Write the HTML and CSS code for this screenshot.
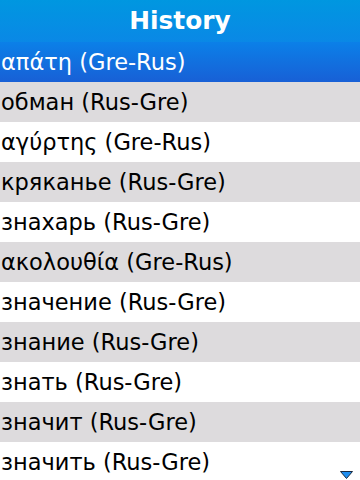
FILE: index.html
```html
<!DOCTYPE html>
<html>
<head>
<meta charset="utf-8">
<link rel="stylesheet" href="styles.css">
</head>
<body>
<div class="screen">
  <div class="header">History</div>
  <ul class="list">
    <li class="row selected">απάτη (Gre-Rus)</li>
    <li class="row alt">обман (Rus-Gre)</li>
    <li class="row">αγύρτης (Gre-Rus)</li>
    <li class="row alt">кряканье (Rus-Gre)</li>
    <li class="row">знахарь (Rus-Gre)</li>
    <li class="row alt">ακολουθία (Gre-Rus)</li>
    <li class="row">значение (Rus-Gre)</li>
    <li class="row alt">знание (Rus-Gre)</li>
    <li class="row">знать (Rus-Gre)</li>
    <li class="row alt">значит (Rus-Gre)</li>
    <li class="row">значить (Rus-Gre)</li>
  </ul>
  <svg class="more" width="13" height="8" viewBox="0 0 13 8">
    <polygon points="0.5,0.5 12.5,0.5 6.5,7.5" fill="#1e8ef0" stroke="#1a2a40" stroke-width="1"/>
  </svg>
</div>
</body>
</html>
```
FILE: styles.css
```css
html, body {
  margin: 0;
  padding: 0;
  background: #ffffff;
}
.screen {
  position: relative;
  width: 360px;
  height: 480px;
  overflow: hidden;
  font-family: "DejaVu Sans", sans-serif;
}
.header {
  height: 42px;
  line-height: 42px;
  text-align: center;
  color: #ffffff;
  font-weight: bold;
  font-size: 24.8px;
  background: linear-gradient(to bottom, #0097e0 0%, #0a88e6 100%);
}
.list {
  list-style: none;
  margin: 0;
  padding: 0;
}
.row {
  height: 40px;
  line-height: 40px;
  padding-left: 1px;
  font-size: 22.5px;
  color: #000000;
  background: #ffffff;
  white-space: nowrap;
}
.row.alt {
  background: #dddbdd;
}
.row.selected {
  color: #ffffff;
  background: linear-gradient(to bottom, #0b80e8 0%, #1860d6 100%);
}
.more {
  position: absolute;
  right: 7px;
  bottom: 1px;
}
```
